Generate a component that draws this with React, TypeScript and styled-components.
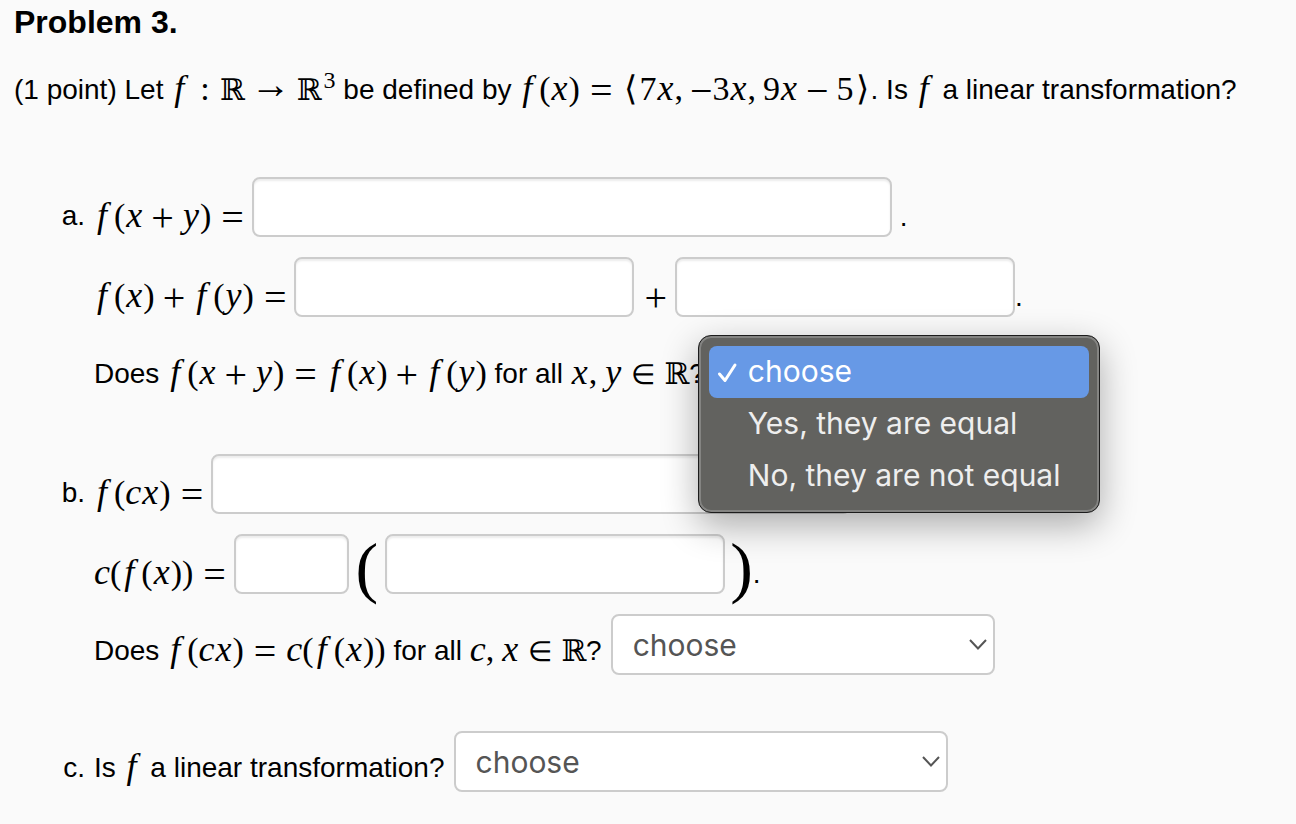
import { useState, type ReactNode } from "react";
import styled, { createGlobalStyle } from "styled-components";

const GlobalStyle = createGlobalStyle`
  * { box-sizing: border-box; }
  body {
    margin: 0;
    background: #fafafa;
    color: #000;
    font-family: "Liberation Sans", Helvetica, Arial, sans-serif;
    font-size: 28px;
    line-height: 40px;
  }
`;

const Page = styled.main`
  padding: 2px 14px 32px;
`;

const Heading = styled.h1`
  margin: 0;
  font-size: 32px;
  line-height: 40px;
`;

const Statement = styled.p`
  margin: 28px 0 67px;
`;

const Parts = styled.ol`
  display: flex;
  flex-direction: column;
  gap: 56px;
  margin: 0;
  padding: 0;
  list-style: none;
`;

const Part = styled.li`
  display: grid;
  grid-template-columns: 71px 1fr;
  column-gap: 9px;
`;

const Marker = styled.span<{ $raised?: boolean }>`
  align-self: start;
  padding-top: ${(p) => (p.$raised ? 17 : 19)}px;
  text-align: right;
`;

const Lines = styled.div`
  display: flex;
  flex-direction: column;
  gap: 20px;
`;

const Line = styled.div<{ $raised?: boolean }>`
  display: flex;
  align-items: flex-end;
  min-height: 60px;

  > label,
  > span {
    padding-bottom: ${(p) => (p.$raised ? 4 : 0)}px;
    white-space: nowrap;
  }
`;

const Period = styled.span<{ $spaced?: boolean }>`
  margin-left: ${(p) => (p.$spaced ? 8 : 0)}px;
`;

const AnswerBox = styled.input<{ $width: number }>`
  width: ${(p) => p.$width}px;
  height: 60px;
  min-width: 0;
  padding: 8px 12px;
  border: 2px solid #ccc;
  border-radius: 8px;
  background: #fff;
  box-shadow: inset 0 2px 2px rgba(0, 0, 0, 0.075);
  font: 30px Inter, sans-serif;
`;

const MathText = styled.span`
  font-family: "Liberation Serif", "Times New Roman", serif;
  font-size: 34px;
  line-height: 0;
  vertical-align: -1px;
  white-space: nowrap;
`;

const Variable = styled.i<{ $tight?: boolean }>`
  margin: 0 ${(p) => (p.$tight ? 0 : 1)}px;
  font-size: 36px;
`;

const FunctionName = styled.i`
  margin: 0 6px 0 3px;
  font-size: 36px;
`;

const Argument = styled.span`
  margin-left: 1px;
`;

const Operator = styled.span`
  font-size: 40px;
  vertical-align: -4px;
`;

const Relation = styled(Operator)`
  margin: 0 10px;

  &:last-child {
    margin-right: 8px;
  }
`;

const Binary = styled(Operator)`
  margin: 0 8px;
`;

const Colon = styled.span`
  margin: 0 10px;
`;

const Arrow = styled.span`
  margin: 0 6px;
  font-size: 40px;
  vertical-align: 2px;
`;

const Member = styled.span`
  margin: 0 9px;
  font-size: 28px;
`;

const Fence = styled.span`
  margin: 0 2px;
`;

const Comma = styled.span`
  margin-right: 7px;
`;

const Blackboard = styled.span`
  font-family: "DejaVu Serif", "DejaVu Sans", serif;
  font-size: 30px;
`;

const Power = styled.sup`
  margin-left: 2px;
  font-size: 24px;
  line-height: 0;
`;

const TallParen = styled.span<{ $close?: boolean }>`
  width: ${(p) => (p.$close ? 28 : 36)}px;
  height: 60px;
  font-family: "Liberation Serif", serif;
  font-size: 68px;
  line-height: 66px;
  text-align: ${(p) => (p.$close ? "right" : "center")};
`;

const SelectWrap = styled.div`
  position: relative;
  display: flex;
  margin-left: 9px;
`;

const Select = styled.select<{ $width: number }>`
  appearance: none;
  width: ${(p) => p.$width}px;
  height: 61px;
  padding: 0 48px 0 20px;
  border: 2px solid #ccc;
  border-radius: 8px;
  background: #fff;
  color: #555;
  font: 30px Inter, sans-serif;
`;

const Chevron = styled.svg`
  position: absolute;
  top: 24px;
  right: 7px;
  pointer-events: none;
`;

const Menu = styled.div`
  position: absolute;
  top: -2px;
  left: -16px;
  z-index: 1;
  width: 402px;
  padding: 10px;
  border: 1px solid #1c1c1c;
  border-radius: 13px;
  background: #62625f;
  box-shadow:
    inset 0 0 0 2px #848482,
    0 12px 36px rgba(0, 0, 0, 0.32);
`;

const MenuItem = styled.button<{ $active: boolean }>`
  display: flex;
  align-items: center;
  width: 100%;
  height: 52px;
  padding: 0 0 2px 8px;
  border: 0;
  border-radius: 8px;
  background: ${(p) => (p.$active ? "#6799e6" : "transparent")};
  color: ${(p) => (p.$active ? "#fff" : "#eee")};
  font: 30px Inter, sans-serif;
  text-align: left;
  white-space: nowrap;
`;

const CheckSlot = styled.span`
  display: flex;
  flex: none;
  width: 31px;
  padding-top: 4px;
`;

const F = () => <FunctionName>f</FunctionName>;
const V = ({ children }: { children: ReactNode }) => <Variable>{children}</Variable>;
const C = () => <Variable $tight>c</Variable>;
const Eq = () => <Relation>=</Relation>;
const Plus = () => <Binary>+</Binary>;
const Reals = () => <Blackboard>ℝ</Blackboard>;
const FOf = ({ children }: { children: ReactNode }) => (
  <><F /><Argument>({children})</Argument></>
);
const FOfX = () => <FOf><V>x</V></FOf>;
const FOfY = () => <FOf><V>y</V></FOf>;
const FOfSum = () => <FOf><V>x</V><Plus /><V>y</V></FOf>;
const FOfCx = () => <FOf><C /><V>x</V></FOf>;
const CTimesF = () => <><C />(<FOfX />)</>;

const equalityChoices = ["choose", "Yes, they are equal", "No, they are not equal"];
const linearChoices = ["choose", "Yes, it is linear", "No, it is not linear"];

function Dropdown({ id, width, choices }: { id: string; width: number; choices: string[] }) {
  return (
    <SelectWrap>
      <Select id={id} $width={width}>
        {choices.map((c) => <option key={c}>{c}</option>)}
      </Select>
      <Chevron width="20" height="14" viewBox="0 0 20 14" fill="none" stroke="#555" strokeWidth="2">
        <path d="M2 2 L10 10.5 L18 2" />
      </Chevron>
    </SelectWrap>
  );
}

function OpenDropdown({ id }: { id: string }) {
  const [chosen, setChosen] = useState(equalityChoices[0]);
  return (
    <SelectWrap>
      <Select id={id} $width={384} value={chosen} onChange={(e) => setChosen(e.target.value)}>
        {equalityChoices.map((c) => <option key={c}>{c}</option>)}
      </Select>
      <Menu role="listbox">
        {equalityChoices.map((c) => (
          <MenuItem key={c} type="button" role="option" aria-selected={c === chosen}
            $active={c === chosen} onClick={() => setChosen(c)}>
            <CheckSlot>
              {c === chosen && (
                <svg width="21" height="22" viewBox="0 0 21 22" fill="none" stroke="#fff"
                  strokeWidth="3" strokeLinecap="round" strokeLinejoin="round">
                  <path d="M2.500 12 L8 18.500 L18 3" />
                </svg>
              )}
            </CheckSlot>
            {c}
          </MenuItem>
        ))}
      </Menu>
    </SelectWrap>
  );
}

export default function App() {
  return (
    <Page>
      <GlobalStyle />
      <Heading>Problem 3.</Heading>
      <Statement>
        (1 point) Let{" "}
        <MathText>
          <F /><Colon>:</Colon><Reals /><Arrow>→</Arrow><Reals /><Power>3</Power>
        </MathText>{" "}
        be defined by{" "}
        <MathText>
          <FOfX /><Eq /><Fence>⟨</Fence>7<V>x</V><Comma>,</Comma><Operator>−</Operator>3<V>x</V>
          <Comma>,</Comma>9<V>x</V><Binary>−</Binary>5<Fence>⟩</Fence>
        </MathText>
        . Is <MathText><F /></MathText> a linear transformation?
      </Statement>

      <Parts>
        <Part>
          <Marker>a.</Marker>
          <Lines>
            <Line>
              <label htmlFor="sum"><MathText><FOfSum /><Eq /></MathText></label>
              <AnswerBox id="sum" $width={640} />
              <Period $spaced>.</Period>
            </Line>
            <Line>
              <label htmlFor="fx"><MathText><FOfX /><Plus /><FOfY /><Eq /></MathText></label>
              <AnswerBox id="fx" $width={340} />
              <label htmlFor="fy"><MathText><Relation>+</Relation></MathText></label>
              <AnswerBox id="fy" $width={340} />
              <Period>.</Period>
            </Line>
            <Line $raised>
              <label htmlFor="additive">
                Does <MathText><FOfSum /><Eq /><FOfX /><Plus /><FOfY /></MathText> for all{" "}
                <MathText><V>x</V><Comma>,</Comma><V>y</V><Member>∈</Member><Reals /></MathText>?
              </label>
              <OpenDropdown id="additive" />
            </Line>
          </Lines>
        </Part>

        <Part>
          <Marker>b.</Marker>
          <Lines>
            <Line>
              <label htmlFor="scaled"><MathText><FOfCx /><Eq /></MathText></label>
              <AnswerBox id="scaled" $width={640} />
            </Line>
            <Line>
              <label htmlFor="scalar"><MathText><CTimesF /><Eq /></MathText></label>
              <AnswerBox id="scalar" $width={115} />
              <TallParen>(</TallParen>
              <AnswerBox aria-label="f(x)" $width={340} />
              <TallParen $close>)</TallParen>
              <Period>.</Period>
            </Line>
            <Line $raised>
              <label htmlFor="homogeneous">
                Does <MathText><FOfCx /><Eq /><CTimesF /></MathText> for all{" "}
                <MathText><C /><Comma>,</Comma><V>x</V><Member>∈</Member><Reals /></MathText>?
              </label>
              <Dropdown id="homogeneous" width={384} choices={equalityChoices} />
            </Line>
          </Lines>
        </Part>

        <Part>
          <Marker $raised>c.</Marker>
          <Lines>
            <Line $raised>
              <label htmlFor="linear">
                Is <MathText><F /></MathText> a linear transformation?
              </label>
              <Dropdown id="linear" width={494} choices={linearChoices} />
            </Line>
          </Lines>
        </Part>
      </Parts>
    </Page>
  );
}
